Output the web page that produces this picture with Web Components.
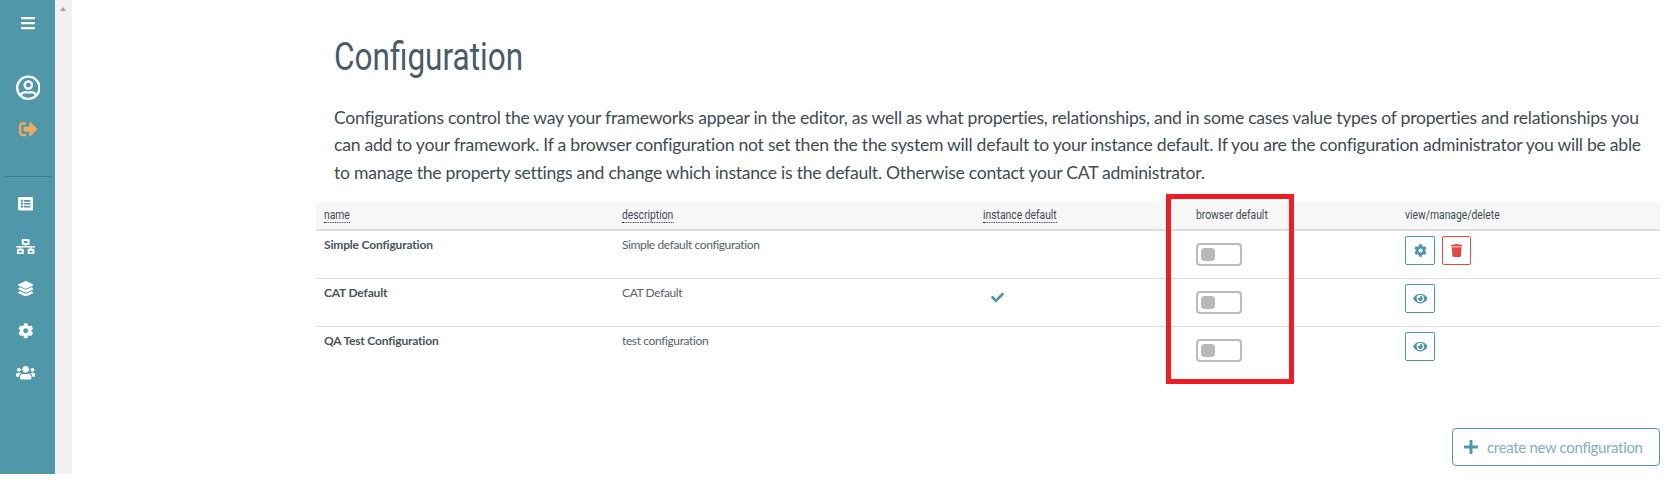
<!DOCTYPE html>
<html>
<head>
<meta charset="utf-8">
<title>Configuration</title>
<style>
    html, body { margin: 0; padding: 0; background: #fff; }
    body { font-family: "Lato", "Liberation Sans", sans-serif; color: #3f4b54; }
</style>
</head>
<body>
<config-page></config-page>

<script>
const ICONS = {
    bars: [448, "M16 132h416c8.837 0 16-7.163 16-16V76c0-8.837-7.163-16-16-16H16C7.163 60 0 67.163 0 76v40c0 8.837 7.163 16 16 16zm0 160h416c8.837 0 16-7.163 16-16v-40c0-8.837-7.163-16-16-16H16c-8.837 0-16 7.163-16 16v40c0 8.837 7.163 16 16 16zm0 160h416c8.837 0 16-7.163 16-16v-40c0-8.837-7.163-16-16-16H16c-8.837 0-16 7.163-16 16v40c0 8.837 7.163 16 16 16z"],
    user: [496, "M248 104c-53 0-96 43-96 96s43 96 96 96 96-43 96-96-43-96-96-96zm0 144c-26.5 0-48-21.5-48-48s21.5-48 48-48 48 21.5 48 48-21.5 48-48 48zm0-240C111 8 0 119 0 256s111 248 248 248 248-111 248-248S385 8 248 8zm0 448c-49.7 0-95.1-18.3-130.1-48.4 14.9-23 40.4-38.6 69.6-39.5 20.8 6.4 40.6 9.6 60.5 9.6s39.7-3.1 60.5-9.6c29.2 1 54.7 16.5 69.6 39.5-35 30.1-80.4 48.4-130.1 48.4zm162.7-84.1c-24.4-31.4-62.1-51.9-105.1-51.9-10.2 0-26 9.6-57.6 9.6-31.5 0-47.4-9.6-57.6-9.6-42.9 0-80.6 20.5-105.1 51.9C61.9 339.2 48 299.2 48 256c0-110.3 89.7-200 200-200s200 89.7 200 200c0 43.2-13.9 83.2-37.3 115.9z"],
    signout: [512, "M497 273L329 441c-15 15-41 4.5-41-17v-96H152c-13.3 0-24-10.7-24-24v-96c0-13.3 10.7-24 24-24h136V88c0-21.4 25.9-32 41-17l168 168c9.3 9.4 9.3 24.6 0 34zM192 436v-40c0-6.6-5.4-12-12-12H96c-17.7 0-32-14.3-32-32V160c0-17.7 14.3-32 32-32h84c6.6 0 12-5.4 12-12V76c0-6.6-5.4-12-12-12H96c-53 0-96 43-96 96v192c0 53 43 96 96 96h84c6.6 0 12-5.4 12-12z"],
    list: [512, "M464 480H48c-26.51 0-48-21.49-48-48V80c0-26.51 21.49-48 48-48h416c26.51 0 48 21.49 48 48v352c0 26.51-21.49 48-48 48zM128 120c-22.091 0-40 17.909-40 40s17.909 40 40 40 40-17.909 40-40-17.909-40-40-40zm0 96c-22.091 0-40 17.909-40 40s17.909 40 40 40 40-17.909 40-40-17.909-40-40-40zm0 96c-22.091 0-40 17.909-40 40s17.909 40 40 40 40-17.909 40-40-17.909-40-40-40zm288-136v-32c0-6.627-5.373-12-12-12H204c-6.627 0-12 5.373-12 12v32c0 6.627 5.373 12 12 12h200c6.627 0 12-5.373 12-12zm0 96v-32c0-6.627-5.373-12-12-12H204c-6.627 0-12 5.373-12 12v32c0 6.627 5.373 12 12 12h200c6.627 0 12-5.373 12-12zm0 96v-32c0-6.627-5.373-12-12-12H204c-6.627 0-12 5.373-12 12v32c0 6.627 5.373 12 12 12h200c6.627 0 12-5.373 12-12z"],
    network: [640, "M640 264v-16c0-8.84-7.16-16-16-16H344v-40h72c17.67 0 32-14.33 32-32V32c0-17.67-14.33-32-32-32H224c-17.67 0-32 14.33-32 32v128c0 17.67 14.33 32 32 32h72v40H16c-8.84 0-16 7.16-16 16v16c0 8.84 7.16 16 16 16h104v40H64c-17.67 0-32 14.33-32 32v128c0 17.67 14.33 32 32 32h160c17.67 0 32-14.33 32-32V352c0-17.67-14.33-32-32-32h-56v-40h304v40h-56c-17.67 0-32 14.33-32 32v128c0 17.67 14.33 32 32 32h160c17.67 0 32-14.33 32-32V352c0-17.67-14.33-32-32-32h-56v-40h104c8.84 0 16-7.16 16-16zM256 128V64h128v64H256zm-64 320H96v-64h96v64zm352 0h-96v-64h96v64z"],
    layers: [512, "M12.41 148.02l232.94 105.67c6.8 3.09 14.49 3.09 21.29 0l232.94-105.67c16.55-7.51 16.55-32.52 0-40.03L266.65 2.31a25.607 25.607 0 0 0-21.29 0L12.41 107.98c-16.55 7.51-16.55 32.53 0 40.04zm487.18 88.28l-58.09-26.33-161.64 73.27c-7.56 3.43-15.59 5.17-23.86 5.17s-16.29-1.74-23.86-5.17L70.51 209.97l-58.1 26.33c-16.55 7.5-16.55 32.5 0 40l232.94 105.59c6.8 3.08 14.49 3.08 21.29 0L499.59 276.3c16.55-7.5 16.55-32.5 0-40zm0 127.8l-57.87-26.23-161.86 73.37c-7.56 3.43-15.59 5.17-23.86 5.17s-16.29-1.74-23.86-5.17L70.29 337.87 12.41 364.1c-16.55 7.5-16.55 32.5 0 40l232.94 105.59c6.8 3.08 14.49 3.08 21.29 0L499.59 404.1c16.55-7.5 16.55-32.5 0-40z"],
    cog: [512, "M487.4 315.7l-42.6-24.6c4.3-23.2 4.3-47 0-70.2l42.6-24.6c4.9-2.8 7.1-8.6 5.5-14-11.1-35.6-30-67.8-54.7-94.6-3.8-4.1-10-5.1-14.8-2.3L380.8 110c-17.9-15.4-38.5-27.3-60.8-35.1V25.8c0-5.6-3.9-10.5-9.4-11.7-36.7-8.2-74.3-7.8-109.2 0-5.5 1.2-9.4 6.1-9.4 11.7V75c-22.2 7.9-42.8 19.8-60.8 35.1L88.7 85.5c-4.9-2.8-11-1.9-14.8 2.3-24.7 26.7-43.6 58.9-54.7 94.6-1.7 5.4.6 11.2 5.5 14L67.3 221c-4.3 23.2-4.3 47 0 70.2l-42.6 24.6c-4.9 2.8-7.1 8.6-5.5 14 11.1 35.6 30 67.8 54.7 94.6 3.8 4.1 10 5.1 14.8 2.3l42.6-24.6c17.9 15.4 38.5 27.3 60.8 35.1v49.2c0 5.6 3.9 10.5 9.4 11.7 36.7 8.2 74.3 7.8 109.2 0 5.5-1.2 9.4-6.1 9.4-11.7v-49.2c22.2-7.9 42.8-19.8 60.8-35.1l42.6 24.6c4.9 2.8 11 1.9 14.8-2.3 24.7-26.7 43.6-58.9 54.7-94.6 1.5-5.5-.7-11.3-5.6-14.1zM256 336c-44.1 0-80-35.9-80-80s35.9-80 80-80 80 35.9 80 80-35.9 80-80 80z"],
    users: [640, "M96 224c35.3 0 64-28.7 64-64s-28.7-64-64-64-64 28.7-64 64 28.7 64 64 64zm448 0c35.3 0 64-28.7 64-64s-28.7-64-64-64-64 28.7-64 64 28.7 64 64 64zm32 32h-64c-17.6 0-33.5 7.1-45.1 18.6 40.3 22.1 68.9 62 75.1 109.4h66c17.7 0 32-14.3 32-32v-32c0-35.3-28.7-64-64-64zm-256 0c61.9 0 112-50.1 112-112S381.9 32 320 32 208 82.1 208 144s50.1 112 112 112zm76.8 32h-8.3c-20.8 10-43.9 16-68.5 16s-47.6-6-68.5-16h-8.3C179.6 288 128 339.6 128 403.2V432c0 26.5 21.5 48 48 48h288c26.5 0 48-21.5 48-48v-28.8c0-63.6-51.6-115.2-115.2-115.2zm-223.7-13.4C161.5 263.1 145.6 256 128 256H64c-35.3 0-64 28.7-64 64v32c0 17.7 14.3 32 32 32h65.9c6.3-47.4 34.9-87.3 75.2-109.4z"],
    check: [512, "M173.898 439.404l-166.4-166.4c-9.997-9.997-9.997-26.206 0-36.204l36.203-36.204c9.997-9.998 26.207-9.998 36.204 0L192 312.69 432.095 72.596c9.997-9.997 26.207-9.997 36.204 0l36.203 36.204c9.997 9.997 9.997 26.206 0 36.204l-294.4 294.401c-9.998 9.997-26.207 9.997-36.204-.001z"],
    plus: [448, "M416 208H272V64c0-17.67-14.33-32-32-32h-32c-17.67 0-32 14.33-32 32v144H32c-17.67 0-32 14.33-32 32v32c0 17.67 14.33 32 32 32h144v144c0 17.67 14.33 32 32 32h32c17.67 0 32-14.33 32-32V304h144c17.67 0 32-14.33 32-32v-32c0-17.67-14.33-32-32-32z"],
    trash: [448, "M432 32H312l-9.4-18.7A24 24 0 0 0 281.1 0H166.8a23.72 23.72 0 0 0-21.4 13.3L136 32H16A16 16 0 0 0 0 48v32a16 16 0 0 0 16 16h416a16 16 0 0 0 16-16V48a16 16 0 0 0-16-16zM53.2 467a48 48 0 0 0 47.9 45h245.8a48 48 0 0 0 47.9-45L416 128H32z"],
    eye: [576, "M572.52 241.4C518.29 135.59 410.93 64 288 64S57.68 135.64 3.48 241.41a32.35 32.35 0 0 0 0 29.19C57.71 376.41 165.07 448 288 448s230.32-71.64 284.52-177.41a32.35 32.35 0 0 0 0-29.19zM288 400a144 144 0 1 1 144-144 143.93 143.93 0 0 1-144 144zm0-240a95.31 95.31 0 0 0-25.31 3.79 47.85 47.85 0 0 1-66.9 66.9A95.78 95.78 0 1 0 288 160z"]
};

class FaIcon extends HTMLElement {
    connectedCallback() {
        const [w, d] = ICONS[this.getAttribute("name")];
        const size = this.getAttribute("size") || 14;
        this.attachShadow({ mode: "open" }).innerHTML = `
            <style>
                :host { display: inline-flex; align-items: center; justify-content: center; line-height: 0; }
                svg { display: block; height: ${size}px; width: ${size * w / 512}px; fill: currentColor; }
            </style>
            <svg viewBox="0 0 ${w} 512"><path d="${d}"/></svg>
        `;
    }
}
customElements.define("fa-icon", FaIcon);

class SideNav extends HTMLElement {
    connectedCallback() {
        this.attachShadow({ mode: "open" }).innerHTML = `
            <style>
                :host { display: flex; flex-direction: column; flex: none; width: 55px; height: 474px; background: #5098a9; color: #fff; }
                .top { display: flex; flex-direction: column; align-items: center; padding-left: 1px; }
                .menu { height: 46px; display: flex; align-items: center; justify-content: center; color: #fff; }
                .account { margin-top: 29px; }
                .logout { margin-top: 19px; color: #f0aa5c; }
                hr { border: 0; border-top: 1px solid #3f7887; margin: 38px 4px 0 5px; }
                .links { display: flex; flex-direction: column; align-items: center; padding-right: 4px; }
                .links fa-icon { height: 42.25px; }
                .links fa-icon:first-child { margin-top: 6px; }
            </style>
            <div class="top">
                <div class="menu"><fa-icon name="bars" size="16"></fa-icon></div>
                <fa-icon class="account" name="user" size="25.5"></fa-icon>
                <fa-icon class="logout" name="signout" size="18.5"></fa-icon>
            </div>
            <hr>
            <div class="links">
                <fa-icon name="list" size="15.5"></fa-icon>
                <fa-icon name="network" size="15.5"></fa-icon>
                <fa-icon name="layers" size="15.5"></fa-icon>
                <fa-icon name="cog" size="15.5"></fa-icon>
                <fa-icon name="users" size="15.5"></fa-icon>
            </div>
        `;
    }
}
customElements.define("side-nav", SideNav);

class ScrollTrack extends HTMLElement {
    connectedCallback() {
        this.attachShadow({ mode: "open" }).innerHTML = `
            <style>
                :host { display: block; flex: none; width: 17px; height: 474px; background: #f1f1f1; padding-top: 7px; box-sizing: border-box; }
                div { width: 0; height: 0; margin-left: 5px; border: 3.5px solid transparent; border-top: 0; border-bottom: 4px solid #a3a3a3; }
            </style>
            <div></div>
        `;
    }
}
customElements.define("scroll-track", ScrollTrack);

class ToggleSwitch extends HTMLElement {
    connectedCallback() {
        this.attachShadow({ mode: "open" }).innerHTML = `
            <style>
                :host { display: block; width: 46px; height: 23px; box-sizing: border-box; border: 2px solid #bbb; border-radius: 4px; padding: 3px; background: #fff; }
                div { width: 14px; height: 13px; border-radius: 4px; background: #b8b8b8; }
            </style>
            <div></div>
        `;
    }
}
customElements.define("toggle-switch", ToggleSwitch);

class IconButton extends HTMLElement {
    connectedCallback() {
        const danger = this.hasAttribute("danger");
        this.attachShadow({ mode: "open" }).innerHTML = `
            <style>
                :host { display: inline-flex; align-items: center; justify-content: center; box-sizing: border-box; height: 29px; width: ${danger ? 29 : 30}px; border: 1px solid ${danger ? "#e04b44" : "#4e97a8"}; border-radius: 2px; color: ${danger ? "#dd4a42" : "#4e97a8"}; background: #fff; }
            </style>
            <fa-icon name="${this.getAttribute("icon")}" size="13"></fa-icon>
        `;
    }
}
customElements.define("icon-button", IconButton);

class ConfigRow extends HTMLElement {
    Construct(row) {
        this.row = row;
    }
    connectedCallback() {
        const r = this.row;
        const buttons = r.own
            ? `<icon-button icon="cog"></icon-button><icon-button icon="trash" danger></icon-button>`
            : `<icon-button icon="eye"></icon-button>`;
        this.attachShadow({ mode: "open" }).innerHTML = `
            <style>
                :host { display: grid; grid-template-columns: 298px 361px 213px 209px 1fr; height: 48px; box-sizing: border-box; padding-left: 8px; border-bottom: 1px solid #ddd; font-size: 12px; color: #56626b; }
                :host(:last-child) { border-bottom: 0; }
                .cell { padding-top: 6px; line-height: 15px; letter-spacing: -.38px; }
                b { font-weight: 700; letter-spacing: -.17px; color: #48545d; }
                .check { padding: 12px 0 0 8px; color: #4e97a8; }
                .toggle { padding-top: 12px; }
                .actions { padding-top: 5px; display: flex; gap: 7px; align-items: flex-start; }
            </style>
            <div class="cell"><b>${r.name}</b></div>
            <div class="cell">${r.description}</div>
            <div class="check">${r.instance ? `<fa-icon name="check" size="13"></fa-icon>` : ""}</div>
            <div class="toggle"><toggle-switch></toggle-switch></div>
            <div class="actions">${buttons}</div>
        `;
    }
}
customElements.define("config-row", ConfigRow);

class ConfigTable extends HTMLElement {
    connectedCallback() {
        this.attachShadow({ mode: "open" }).innerHTML = `
            <style>
                :host { display: block; position: relative; }
                header { display: grid; grid-template-columns: 298px 361px 213px 209px 1fr; height: 29px; box-sizing: border-box; padding-left: 8px; background: #f7f7f7; border-bottom: 2px solid #ddd; font-family: "Roboto", "Liberation Sans", sans-serif; font-size: 12px; line-height: 27px; color: #3f4b54; }
                span { display: inline-block; line-height: 14px; transform: scaleX(.86); transform-origin: left; }
                .tip { border-bottom: 1px dotted #222; }
                .mark { position: absolute; left: 850px; top: -8px; width: 128px; height: 190px; box-sizing: border-box; border: 5px solid #ee1c25; }
            </style>
            <header>
                <div><span class="tip">name</span></div>
                <div><span class="tip">description</span></div>
                <div><span class="tip">instance default</span></div>
                <div><span>browser default</span></div>
                <div><span>view/manage/delete</span></div>
            </header>
            <section id="rows"></section>
            <div class="mark"></div>
        `;
        const rows = [
            { name: "Simple Configuration", description: "Simple default configuration", own: true },
            { name: "CAT Default", description: "CAT Default", instance: true },
            { name: "QA Test Configuration", description: "test configuration" }
        ];
        rows.forEach(x => {
            let row = document.createElement("config-row");
            row.Construct(x);
            this.shadowRoot.querySelector("#rows").appendChild(row);
        });
    }
}
customElements.define("config-table", ConfigTable);

class ConfigPage extends HTMLElement {
    connectedCallback() {
        this.attachShadow({ mode: "open" }).innerHTML = `
            <style>
                :host { display: flex; align-items: flex-start; height: 484px; overflow: hidden; }
                main { flex: none; width: 1344px; margin-left: 244px; }
                h1 { margin: 0; padding: 34px 0 0 18px; font: 400 38px/46px "Roboto", "Liberation Sans", sans-serif; color: #4a5a67; height: 46px; }
                h1 span { display: inline-block; transform: scaleX(.83); transform-origin: left; }
                p { margin: 0; padding: 24px 0 0 18px; font-size: 17.6px; letter-spacing: -.26px; line-height: 27.4px; color: #3f4b54; }
                config-table { margin-top: 16px; }
                .foot { display: flex; justify-content: flex-end; margin-top: 53px; }
                .create { display: flex; align-items: center; gap: 9px; box-sizing: border-box; width: 208px; height: 38px; padding-left: 11px; border: 1px solid #4e97a8; border-radius: 4px; color: #7fb0bc; font-size: 15px; letter-spacing: -.33px; white-space: nowrap; }
                .create fa-icon { color: #4e97a8; }
            </style>
            <side-nav></side-nav>
            <scroll-track></scroll-track>
            <main>
                <h1><span>Configuration</span></h1>
                <p>Configurations control the way your frameworks appear in the editor, as well as what properties, relationships, and in some cases value types of properties and relationships you can add to your framework. If a browser configuration not set then the the system will default to your instance default. If you are the configuration administrator you will be able to manage the property settings and change which instance is the default. Otherwise contact your CAT administrator.</p>
                <config-table></config-table>
                <div class="foot"><div class="create"><fa-icon name="plus" size="16"></fa-icon>create new configuration</div></div>
            </main>
        `;
    }
}
customElements.define("config-page", ConfigPage);
</script>
</body>
</html>
